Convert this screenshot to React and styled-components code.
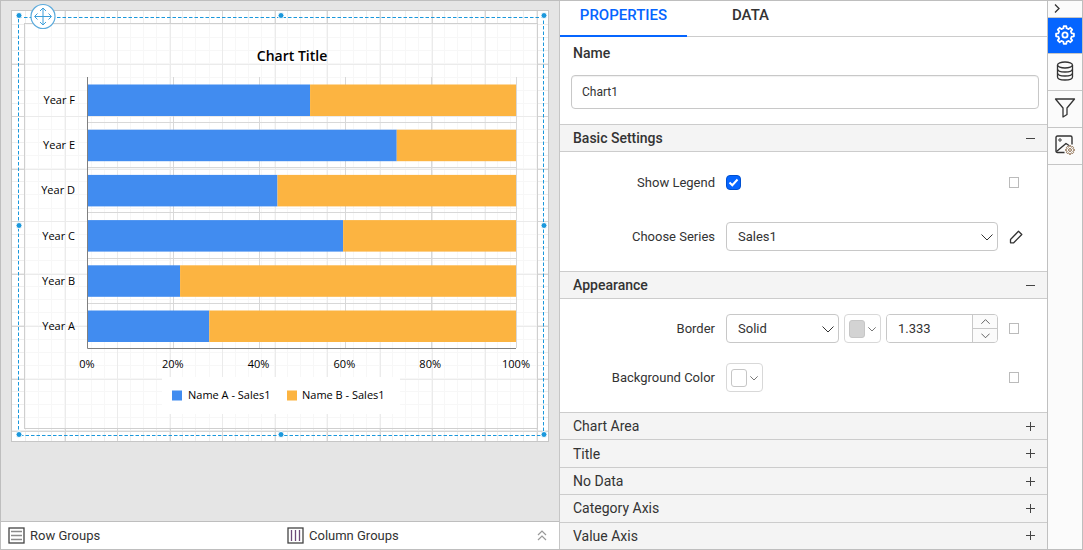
import React, {useState} from 'react';
import styled, {createGlobalStyle} from 'styled-components';

const BLUE = '#418cf0';
const ORANGE = '#fcb441';

const years = [
    {name: 'Year F', split: 52},
    {name: 'Year E', split: 72.2},
    {name: 'Year D', split: 44.4},
    {name: 'Year C', split: 59.7},
    {name: 'Year B', split: 21.7},
    {name: 'Year A', split: 28.5},
];

const collapsed = ['Chart Area', 'Title', 'No Data', 'Category Axis', 'Value Axis'];

const Chevron = ({size = 12, up, ...rest}) => (
    <svg width={size} height={size} viewBox="0 0 12 12" fill="none" stroke="currentColor" aria-hidden="true" {...rest}>
        <path d={up ? 'M0.5 9L6 3.5L11.5 9' : 'M0.5 3.5L6 9L11.5 3.5'} />
    </svg>
);

const gearPath = (c, outer, inner, teeth) => {
    const pts = [];
    for (let i = 0; i < teeth; i++) {
        const a = (i / teeth) * Math.PI * 2 - Math.PI / 2;
        const step = (Math.PI * 2) / teeth;
        [[-0.3, inner], [-0.18, outer], [0.18, outer], [0.3, inner]].forEach(([o, r]) => {
            pts.push(`${(c + Math.cos(a + o * step) * r).toFixed(2)} ${(c + Math.sin(a + o * step) * r).toFixed(2)}`);
        });
    }
    return `M${pts.join('L')}Z`;
};

const GearIcon = () => (
    <svg width="20" height="20" viewBox="0 0 20 20" fill="none" stroke="currentColor" strokeWidth="1.8" strokeLinejoin="round">
        <path d={gearPath(10, 9, 6.9, 8)} />
        <circle cx="10" cy="10" r="2.6" />
    </svg>
);

const DatabaseIcon = () => (
    <svg width="18" height="20" viewBox="0 0 18 20" fill="none" stroke="currentColor" strokeWidth="1.3">
        <ellipse cx="9" cy="4" rx="7.5" ry="3" />
        <path d="M1.5 4V16C1.5 17.7 4.9 19 9 19S16.5 17.7 16.5 16V4" />
        <path d="M1.5 8C1.5 9.7 4.9 11 9 11S16.5 9.7 16.5 8M1.5 12C1.5 13.7 4.9 15 9 15S16.5 13.7 16.5 12" />
    </svg>
);

const FilterIcon = () => (
    <svg width="22" height="20" viewBox="0 0 22 20" fill="none" stroke="currentColor" strokeWidth="1.3" strokeLinejoin="round">
        <path d="M1.5 1H20.5L13 10V16.5L9 19V10Z" />
    </svg>
);

const ImageIcon = () => (
    <svg width="20" height="20" viewBox="0 0 20 20" fill="none" stroke="currentColor" strokeWidth="1.4" strokeLinejoin="round">
        <path d="M9.5 17.5H2.5Q1 17.5 1 16V2.5Q1 1 2.5 1H15.5Q17 1 17 2.5V9.5" />
        <path d="M1.5 16.5L11 8.5L14 10.5" />
        <circle cx="5" cy="5" r="1.2" strokeWidth="1" />
        <g stroke="#8a6a4a" strokeWidth="1">
            <path d={gearPath(15, 4.4, 3.4, 8)} />
            <circle cx="15" cy="15" r="1.4" />
        </g>
    </svg>
);

const steps = (n, gap) => Array.from({length: n}, (_, i) => (i + 1) * gap);

// drawn in the paper's own coordinates
const ReportCanvas = () => (
    <CanvasSvg viewBox="0 0 536 430" role="img" aria-label="Chart Title">
        <g stroke="#eeeeee">
            {steps(40, 13.1).map(x => <path key={x} d={`M${Math.round(x) + 0.5} 0V430`} />)}
            {steps(32, 13.1).map(y => <path key={y} d={`M0 ${Math.round(y) + 0.5}H536`} />)}
        </g>
        <g stroke="#d6d6d6">
            {steps(10, 52.5).map(x => <path key={x} d={`M${Math.round(x) + 0.5} 0V430`} />)}
            {steps(8, 52.5).map(y => <path key={y} d={`M0 ${Math.round(y) + 0.5}H536`} />)}
        </g>
        <rect x="12.5" y="12.5" width="513" height="405" fill="#fff" fillOpacity="0.5" stroke="#cfcfcf" />

        <text x="280" y="50" className="title">Chart Title</text>
        <g stroke="#d8d8d8">
            {[161, 247, 333, 419, 504].map(x => <path key={x} d={`M${x + 0.5} 66V337`} />)}
            {[111, 156, 201, 247, 292].map(y => <path key={y} d={`M75 ${y + 0.5}H504`} />)}
        </g>
        {years.map((year, i) => {
            const top = 73.5 + i * 45.2;
            const mid = 75 + year.split * 4.29;
            return (
                <g key={year.name}>
                    <rect x="75" y={top} width={mid - 75} height="31.5" fill={BLUE} />
                    <rect x={mid} y={top} width={504 - mid} height="31.5" fill={ORANGE} />
                    <text x="63" y={top + 19.5} textAnchor="end">{year.name}</text>
                </g>
            );
        })}
        <path d="M75.5 66V337.5H504" fill="none" stroke="#808080" />
        {[0, 20, 40, 60, 80, 100].map(n => (
            <text key={n} x={75 + n * 4.29} y="357" textAnchor="middle">{n}%</text>
        ))}

        <rect x="150" y="366" width="238" height="37" fill="#fff" />
        <rect x="160" y="379.5" width="10" height="10" fill={BLUE} />
        <text x="176" y="388">Name A - Sales1</text>
        <rect x="275" y="379.5" width="10" height="10" fill={ORANGE} />
        <text x="290" y="388">Name B - Sales1</text>

        <rect x="6.5" y="6.5" width="525" height="418" fill="none" stroke="#1b98dc" strokeDasharray="3.5 2" />
        {[[7, 4.5], [269, 4.5], [532, 4.5], [7, 214.5], [532, 214.5], [7, 423.5], [269, 423.5], [532, 423.5]].map(([x, y]) => (
            <circle key={`${x}-${y}`} cx={x} cy={y} r="3" fill="#1b98dc" stroke="#fff" />
        ))}
        <g fill="none" stroke="#3d9fda">
            <circle cx="31" cy="5.5" r="12" fill="#fff" stroke="#5aaadc" strokeWidth="1.2" />
            <path d="M23 5.5H39M31 -2.5V13.5M25.5 2.5L22.5 5.5L25.5 8.5M36.5 2.5L39.5 5.5L36.5 8.5M28 0L31 -3L34 0M28 11L31 14L34 11" />
        </g>
    </CanvasSvg>
);

const App = () => {
    const [tab, setTab] = useState('PROPERTIES');

    return (
        <>
            <GlobalStyle />
            <Designer>
                <Workspace>
                    <Surface>
                        <Paper><ReportCanvas /></Paper>
                    </Surface>
                    <Groups>
                        <Group>
                            <svg width="17" height="17" viewBox="0 0 17 17" fill="none">
                                <rect x="1" y="1" width="15" height="15" stroke="#444" strokeWidth="1.3" />
                                <path d="M3 4.5H14M3 8.5H14M3 12.5H14" stroke="#8a8a8a" strokeWidth="1.5" />
                            </svg>
                            Row Groups
                        </Group>
                        <Group>
                            <svg width="17" height="17" viewBox="0 0 17 17" fill="none">
                                <rect x="1" y="1" width="15" height="15" stroke="#444" strokeWidth="1.3" />
                                <path d="M4.5 3V14M8.5 3V14M12.5 3V14" stroke="#6d4a78" strokeWidth="1.3" />
                            </svg>
                            Column Groups
                            <Expand type="button" aria-label="Expand groups">
                                <svg width="10" height="11" viewBox="0 0 10 11" fill="none" stroke="#999" strokeWidth="1.2">
                                    <path d="M1 5L5 1L9 5M1 10L5 6L9 10" />
                                </svg>
                            </Expand>
                        </Group>
                    </Groups>
                </Workspace>

                <Panel>
                    <Tabs role="tablist">
                        {['PROPERTIES', 'DATA'].map(name => (
                            <Tab key={name} type="button" role="tab" aria-selected={tab === name} $active={tab === name} onClick={() => setTab(name)}>
                                {name}
                            </Tab>
                        ))}
                    </Tabs>
                    <NameField>
                        <label htmlFor="name">Name</label>
                        <NameInput id="name" type="text" defaultValue="Chart1" />
                    </NameField>

                    <SectionHead type="button" $open aria-expanded="true">
                        Basic Settings <Sign $minus />
                    </SectionHead>
                    <SectionBody $top="16px" $gap="25px">
                        <Row>
                            <Label htmlFor="legend">Show Legend</Label>
                            <Field>
                                <Check>
                                    <input id="legend" type="checkbox" defaultChecked />
                                    <svg width="15" height="15" viewBox="0 0 15 15" fill="none" stroke="#fff" strokeWidth="2">
                                        <path d="M3.5 7.5L6.3 10.2L11.5 4.5" />
                                    </svg>
                                </Check>
                            </Field>
                            <Side><Marker type="button" aria-label="Show legend options" /></Side>
                        </Row>
                        <Row>
                            <Label htmlFor="series">Choose Series</Label>
                            <Field>
                                <SelectBox>
                                    <select id="series"><option>Sales1</option></select>
                                    <Chevron />
                                </SelectBox>
                            </Field>
                            <Side>
                                <EditButton type="button" aria-label="Edit series">
                                    <svg width="14" height="14" viewBox="0 0 14 14" fill="none" stroke="currentColor" strokeWidth="1.3" strokeLinejoin="round">
                                        <path d="M1.5 9.5L9.5 1.2L12.8 4.5L4.7 12.8H1.5Z" />
                                    </svg>
                                </EditButton>
                            </Side>
                        </Row>
                    </SectionBody>

                    <SectionHead type="button" $open aria-expanded="true">
                        Appearance <Sign $minus />
                    </SectionHead>
                    <SectionBody $top="15px" $gap="20px">
                        <Row>
                            <Label htmlFor="border">Border</Label>
                            <Field>
                                <SelectBox>
                                    <select id="border"><option>Solid</option></select>
                                    <Chevron />
                                </SelectBox>
                                <ColorButton type="button" aria-label="Border color">
                                    <Swatch $color="#d3d3d3" /><Chevron size={8} />
                                </ColorButton>
                                <Stepper>
                                    <input type="text" aria-label="Border width" defaultValue="1.333" />
                                    <div>
                                        <button type="button" aria-label="Increase"><Chevron size={9} up /></button>
                                        <button type="button" aria-label="Decrease"><Chevron size={9} /></button>
                                    </div>
                                </Stepper>
                            </Field>
                            <Side><Marker type="button" aria-label="Border options" /></Side>
                        </Row>
                        <Row>
                            <Label htmlFor="background">Background Color</Label>
                            <Field>
                                <ColorButton id="background" type="button">
                                    <Swatch $color="#fff" /><Chevron size={8} />
                                </ColorButton>
                            </Field>
                            <Side><Marker type="button" aria-label="Background options" /></Side>
                        </Row>
                    </SectionBody>

                    <Collapsed>
                        {collapsed.map(name => (
                            <SectionHead key={name} type="button" aria-expanded="false">
                                {name} <Sign />
                            </SectionHead>
                        ))}
                    </Collapsed>
                </Panel>

                <Rail>
                    <RailToggle type="button" aria-label="Collapse panel">
                        <svg width="6" height="9" viewBox="0 0 6 9" fill="none" stroke="currentColor" strokeWidth="1.3">
                            <path d="M1 0.5L5 4.5L1 8.5" />
                        </svg>
                    </RailToggle>
                    <RailButton type="button" aria-label="Properties" $active><GearIcon /></RailButton>
                    <RailButton type="button" aria-label="Data"><DatabaseIcon /></RailButton>
                    <RailButton type="button" aria-label="Filters"><FilterIcon /></RailButton>
                    <RailButton type="button" aria-label="Images"><ImageIcon /></RailButton>
                </Rail>
            </Designer>
        </>
    );
};

const GlobalStyle = createGlobalStyle`
    * {
        box-sizing: border-box;
    }

    body {
        margin: 0;
        font-family: Roboto, "Liberation Sans", sans-serif;
        font-size: 13px;
        color: #333;
    }

    button, input, select {
        font: inherit;
        color: inherit;
        margin: 0;
    }

    svg {
        display: block;
        flex: none;
    }
`

const Designer = styled.div`
    display: flex;
    min-height: 100vh;
    border: 1px solid #bebebe;
`

const Workspace = styled.main`
    flex: 1;
    min-width: 0;
    display: flex;
    flex-direction: column;
    background-color: #e5e5e5;
`

const Surface = styled.div`
    flex: 1;
    padding: 9px 10px;
`

const Paper = styled.div`
    background-color: #fff;
    border: 1px solid #c6c6c6;
`

const CanvasSvg = styled.svg`
    width: 100%;
    height: auto;
    overflow: visible;

    text {
        font-family: "Open Sans", "Noto Sans", sans-serif;
        font-size: 11px;
        fill: #000;
    }

    .title {
        font-size: 14px;
        font-weight: 600;
        text-anchor: middle;
    }
`

const Groups = styled.div`
    display: flex;
    height: 28px;
    background-color: #fff;
    border-top: 1px solid #bebebe;
`

const Group = styled.div`
    flex: 1;
    display: flex;
    align-items: center;
    gap: 5px;
    padding: 0 12px 0 7px;
`

const Expand = styled.button`
    margin-left: auto;
    border: 0;
    padding: 0;
    background: none;
`

const Panel = styled.section`
    flex: 0 0 488px;
    display: flex;
    flex-direction: column;
    background-color: #fff;
    border-left: 1px solid #c6c6c6;
`

const Tabs = styled.div`
    display: flex;
    height: 36px;
    border-bottom: 1px solid #ccc;
`

const Tab = styled.button`
    width: 127px;
    height: 36px;
    padding: 0 0 6px;
    border: 0;
    border-bottom: 2px solid ${props => props.$active ? '#0565ff' : 'transparent'};
    background: none;
    font-size: 15px;
    font-weight: 500;
    color: ${props => props.$active ? '#0565ff' : '#333'};
`

const NameField = styled.div`
    display: flex;
    flex-direction: column;
    gap: 14px;
    padding: 9px 8px 15px 11px;

    label {
        padding-left: 2px;
        line-height: 15px;
        font-size: 14px;
        font-weight: 500;
    }
`

const NameInput = styled.input`
    width: 100%;
    height: 34px;
    padding: 0 10px;
    border: 1px solid #c8c8c8;
    border-radius: 4px;
    box-shadow: inset 0 1px 1px rgba(0,0,0,0.06);
    font-size: 12px;
`

const SectionHead = styled.button`
    display: flex;
    justify-content: space-between;
    align-items: center;
    height: 28px;
    padding: 0 12px 0 13px;
    border: 0;
    border-top: 1px solid #ccc;
    border-bottom: ${props => props.$open ? '1px solid #ccc' : '0'};
    background-color: #f4f4f4;
    font-size: 14px;
    font-weight: ${props => props.$open ? 500 : 400};
    text-align: left;
`

const Sign = styled.span`
    width: 9px;
    height: 9px;
    background:
        linear-gradient(#444, #444) center / 9px 1px no-repeat,
        linear-gradient(#444, #444) center / ${props => props.$minus ? '0 0' : '1px 9px'} no-repeat;
`

const SectionBody = styled.div`
    display: flex;
    flex-direction: column;
    gap: ${props => props.$gap};
    padding: ${props => props.$top} 0 20px;
`

const Row = styled.div`
    display: grid;
    grid-template-columns: 155px 1fr 38px;
    align-items: center;
    column-gap: 11px;
    min-height: 29px;
`

const Label = styled.label`
    text-align: right;
`

const Field = styled.div`
    display: flex;
    gap: 5px;
    min-width: 0;
`

const Side = styled.div`
    display: flex;
`

const Marker = styled.button`
    width: 10px;
    height: 11px;
    padding: 0;
    border: 1px solid #bbb;
    background-color: #fff;
`

const Check = styled.span`
    display: grid;

    > * {
        grid-area: 1 / 1;
    }

    input {
        appearance: none;
        width: 15px;
        height: 15px;
        border: 1px solid #0050d0;
        border-radius: 4px;
        background-color: #0565ff;
    }

    svg {
        pointer-events: none;
    }
`

const SelectBox = styled.div`
    flex: 1;
    display: grid;
    align-items: center;

    > * {
        grid-area: 1 / 1;
    }

    select {
        appearance: none;
        width: 100%;
        height: 29px;
        padding: 0 11px;
        border: 1px solid #c8c8c8;
        border-radius: 4px;
        background-color: #fff;
    }

    svg {
        justify-self: end;
        margin-right: 5px;
        pointer-events: none;
    }
`

const EditButton = styled.button`
    padding: 0;
    border: 0;
    background: none;
`

const ColorButton = styled.button`
    display: flex;
    align-items: center;
    gap: 3px;
    width: 37px;
    height: 29px;
    padding: 0 4px;
    border: 1px solid #d8d8d8;
    border-radius: 4px;
    background-color: #fff;
`

const Swatch = styled.span`
    width: 18px;
    height: 18px;
    border: 1px solid #c6c6c6;
    border-radius: 3px;
    background-color: ${props => props.$color};
`

const Stepper = styled.div`
    display: flex;
    width: 112px;
    height: 29px;
    border: 1px solid #c8c8c8;
    border-radius: 4px;
    overflow: hidden;

    input {
        flex: 1;
        min-width: 0;
        padding: 0 11px;
        border: 0;
    }

    div {
        display: flex;
        flex-direction: column;
        width: 25px;
        border-left: 1px solid #c8c8c8;
    }

    button {
        flex: 1;
        display: flex;
        align-items: center;
        justify-content: center;
        padding: 0;
        border: 0;
        background-color: #fbfbfb;
    }

    button + button {
        border-top: 1px solid #c8c8c8;
    }
`

const Collapsed = styled.div`
    flex: 1;
    display: flex;
    flex-direction: column;

    ${SectionHead} {
        flex: 1;
    }
`

const Rail = styled.nav`
    flex: 0 0 35px;
    display: flex;
    flex-direction: column;
    border-left: 1px solid #c0c0c0;
    background-color: #fbfbfb;
`

const RailToggle = styled.button`
    height: 16px;
    padding: 0 0 2px 6px;
    border: 0;
    background: none;
`

const RailButton = styled.button`
    display: flex;
    align-items: center;
    justify-content: center;
    height: 37px;
    padding: 0 0 2px;
    border: 0;
    border-top: ${props => props.$active ? '1px solid #c6c6c6' : '0'};
    border-bottom: 1px solid #c6c6c6;
    background-color: ${props => props.$active ? '#0565ff' : 'transparent'};
    color: ${props => props.$active ? '#fff' : '#333'};
`

export default App;
